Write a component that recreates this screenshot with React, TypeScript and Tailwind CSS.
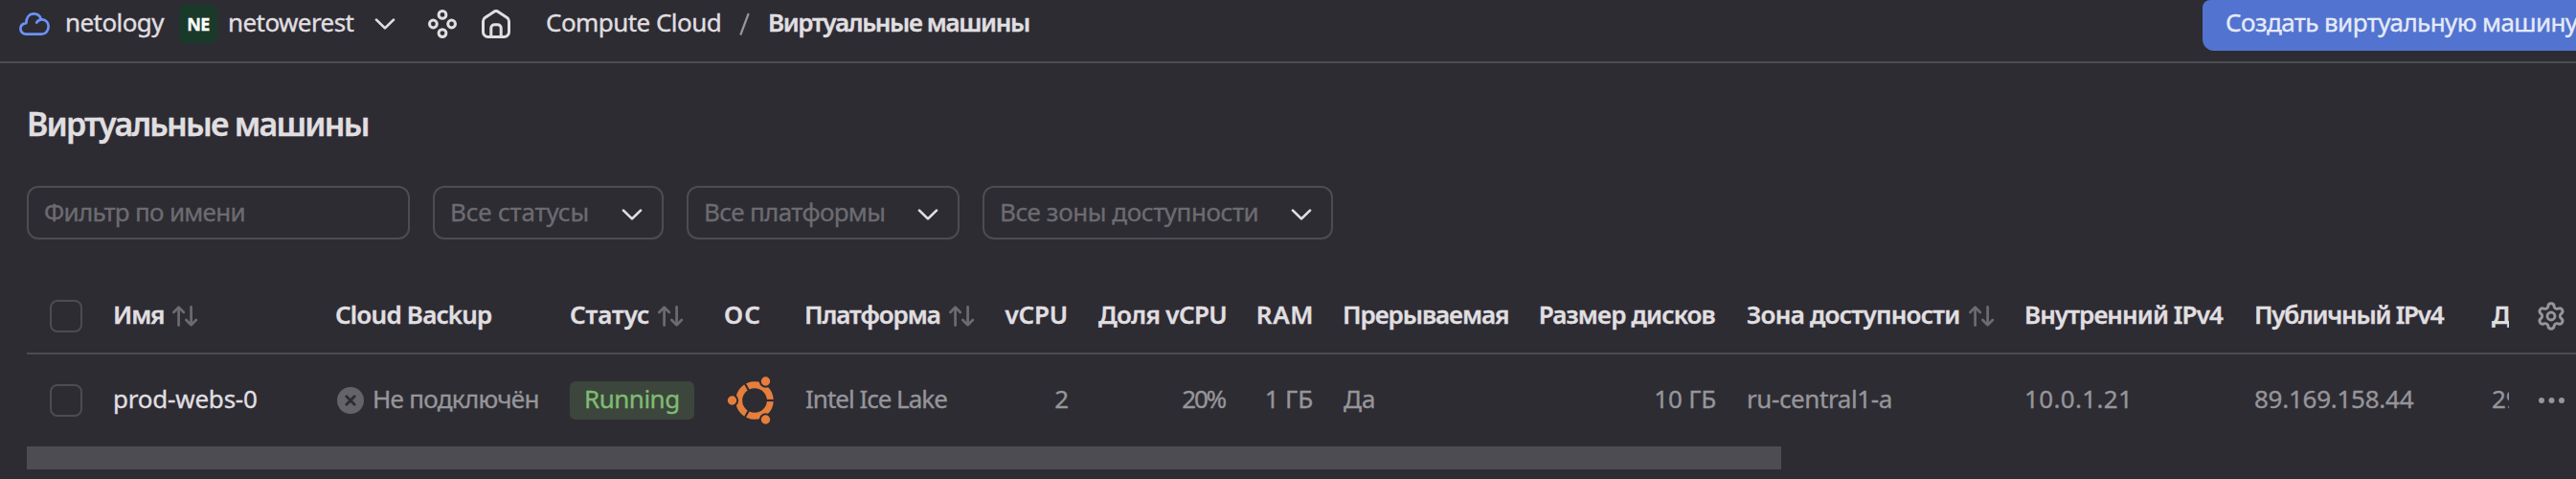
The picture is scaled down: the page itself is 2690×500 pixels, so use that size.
import type { ReactNode } from "react";
import { Settings } from "lucide-react";

function Chevron({ className = "" }: { className?: string }) {
  return (
    <svg className={"shrink-0 " + className} width="22" height="12" viewBox="0 0 22 12" fill="none" stroke="#e0dfe0" strokeWidth="2.7" strokeLinecap="round" strokeLinejoin="round">
      <path d="M2 1.6 11 10.4 20 1.6" />
    </svg>
  );
}

function SortArrows() {
  return (
    <svg className="ml-2 mt-1 shrink-0" width="28" height="22" viewBox="0 0 28 22" fill="none" stroke="#6c6b70" strokeWidth="2.7" strokeLinecap="round" strokeLinejoin="round">
      <path d="M7.6 20.6V1.8M2.4 7 7.6 1.6 12.8 7" />
      <path d="M20.6 1.4V20.2M15.4 15 20.6 20.4 25.8 15" />
    </svg>
  );
}

function CloudLogo() {
  return (
    <svg className="shrink-0" width="32" height="24" viewBox="0 0 32 24" fill="none" stroke="#6b93f6" strokeWidth="2.7" strokeLinecap="round" strokeLinejoin="round">
      <path d="M18.2 10.6A6.2 6.2 0 0 1 24 7.4a7 7 0 0 1 6.6 7.3c0 4.4-3 7.9-7.2 7.9H7.2a5.8 5.8 0 0 1-5.8-5.7c0-3 2.3-5.3 5.9-5.8C7.4 5.3 10.6 1.4 15.4 1.4c3.8 0 6.6 2.5 7.5 6" />
    </svg>
  );
}

function ServicesIcon() {
  return (
    <svg className="shrink-0" width="30" height="30" viewBox="0 0 30 30" fill="none" stroke="#e0dfe0" strokeWidth="3">
      <circle cx="15" cy="5.4" r="3.9" />
      <circle cx="5.4" cy="15" r="3.9" />
      <circle cx="24.6" cy="15" r="3.9" />
      <circle cx="15" cy="24.6" r="3.9" />
    </svg>
  );
}

function HomeIcon() {
  return (
    <svg className="shrink-0" width="30" height="30" viewBox="0 0 30 30" fill="none" stroke="#e0dfe0" strokeWidth="3" strokeLinecap="round" strokeLinejoin="round">
      <path d="M1.5 12.2c0-1.5.7-2.8 1.9-3.7L12.9 2.2c1.3-.9 2.9-.9 4.2 0L26.6 8.5c1.2.9 1.9 2.2 1.9 3.7V23.500a5 5 0 0 1-5 5H6.500a5 5 0 0 1-5-5Z" />
      <path d="M9.8 28V19.300a3.500 3.500 0 0 1 3.500-3.500h3.400a3.500 3.500 0 0 1 3.500 3.500V28" />
    </svg>
  );
}

function UbuntuLogo() {
  return (
    <svg className="ml-[2px] shrink-0" width="50" height="52" viewBox="-29 -26 50 52">
      <circle r="16.3" fill="none" stroke="#e67e3c" strokeWidth="6.9" />
      <g stroke="#2d2c33" strokeWidth="2.2">
        <path d="M11 0H21" />
        <path d="M-5.5-9.53-10.5-18.19" />
        <path d="M-5.5 9.53-10.5 18.19" />
      </g>
      <g fill="#e67e3c" stroke="#2d2c33" strokeWidth="2">
        <circle cx="-23.5" r="5.7" />
        <circle cx="11.5" cy="-20" r="5.7" />
        <circle cx="11.5" cy="20" r="5.7" />
      </g>
    </svg>
  );
}

function CrossBadge() {
  return (
    <svg className="ml-[2px] mr-[9px] shrink-0" width="28" height="28" viewBox="0 0 28 28">
      <circle cx="14" cy="14" r="14" fill="#646369" />
      <path d="M9.8 9.8 18.2 18.2M18.2 9.8 9.8 18.2" stroke="#2d2c33" strokeWidth="2.8" strokeLinecap="round" />
    </svg>
  );
}

function Checkbox() {
  return <span className="ml-6 block size-[34px] rounded-[8px] border-2 border-[#4d4c52]" />;
}

function Select({ children, className }: { children: ReactNode; className: string }) {
  return (
    <div className={"flex h-14 items-center justify-between rounded-xl border-2 border-[#4d4c52] pl-4 pr-[20px] text-[#6c6b70] " + className}>
      <span className="pb-[3px]">{children}</span>
      <Chevron className="mt-[3px]" />
    </div>
  );
}

function Cell({ children, className = "" }: { children?: ReactNode; className?: string }) {
  return <div className={"flex items-center pb-1 " + className}>{children}</div>;
}

const columns =
  "grid w-[2592px] shrink-0 overflow-hidden grid-cols-[89px_232px_245px_162px_84px_190px_87px_165px_90px_231px_190px_320px_240px_249px_18px]";

export default function App() {
  return (
    <div className="h-[500px] w-[2690px] overflow-hidden whitespace-nowrap bg-[#2d2c33] font-['Noto_Sans','Open_Sans',sans-serif] text-[26px] leading-9 text-[#e0dfe0] [-webkit-text-stroke:0.35px]">
      <header className="flex h-[66px] items-start justify-between border-b-2 border-[#4d4c52]">
        <div className="flex h-[50px] items-center pl-5">
          <CloudLogo />
          <span className="ml-4 w-[103px] pb-1 tracking-[-0.58px]">netology</span>
          <span className="ml-4 flex h-10 w-10 items-center justify-center rounded-[7px] bg-[#1a3a29] text-lg font-bold tracking-[-0.6px] text-white">NE</span>
          <span className="ml-[11px] w-[132px] pb-1 tracking-[-0.58px]">netowerest</span>
          <Chevron className="ml-[21px]" />
          <span className="ml-[34px] flex gap-[26px]">
            <ServicesIcon />
            <HomeIcon />
          </span>
          <span className="ml-[37px] w-[182px] pb-1 tracking-[-0.55px]">Compute Cloud</span>
          <svg className="ml-5 shrink-0" width="11" height="24" viewBox="0 0 11 24" stroke="#969599" strokeWidth="2.2">
            <path d="M1.3 23.5 9.7 1" />
          </svg>
          <span className="ml-[19px] pb-1 font-semibold tracking-[-1.37px]">Виртуальные машины</span>
        </div>
        <div className="h-[53px] w-[390px] overflow-hidden rounded-bl-xl rounded-tl-[8px] bg-[#5273d0] pl-6 pt-[5px] tracking-[-0.59px] text-[#e5eaf8]">
          Создать виртуальную машину
        </div>
      </header>

      <main className="pl-7">
        <h1 className="pt-10 text-[34px] font-semibold leading-[46px] tracking-[-1.8px]">Виртуальные машины</h1>

        <div className="mt-[42px] flex gap-6">
          <div className="flex h-14 w-[400px] items-center rounded-xl border-2 border-[#4d4c52] pb-[2px] pl-4 tracking-[-0.7px] text-[#6c6b70]">Фильтр по имени</div>
          <Select className="w-[241px] tracking-[-0.15px]">Все статусы</Select>
          <Select className="w-[285px] tracking-[-0.65px]">Все платформы</Select>
          <Select className="w-[366px] tracking-[-0.42px]">Все зоны доступности</Select>
        </div>

        <div className="mt-[42px] flex h-[78px] border-b-2 border-[#4d4c52] font-semibold">
          <div className={columns}>
            <div className="flex items-center"><Checkbox /></div>
            <Cell className="pl-px"><span className="tracking-[-1.1px]">Имя</span><SortArrows /></Cell>
            <Cell className="pl-px tracking-[-0.8px]">Cloud Backup</Cell>
            <Cell className="pl-px"><span className="tracking-[-0.1px]">Статус</span><SortArrows /></Cell>
            <Cell className="tracking-[1.2px]">ОС</Cell>
            <Cell><span className="tracking-[-1.07px]">Платформа</span><SortArrows /></Cell>
            <Cell className="justify-end pr-[2px] tracking-[-0.17px]">vCPU</Cell>
            <Cell className="justify-end pr-px tracking-[-0.65px]">Доля vCPU</Cell>
            <Cell className="justify-end tracking-[0.6px]">RAM</Cell>
            <Cell className="pl-[30px] tracking-[-1.05px]">Прерываемая</Cell>
            <Cell className="justify-end pr-[2px] tracking-[-0.81px]">Размер дисков</Cell>
            <Cell className="pl-[31px]"><span className="tracking-[-0.72px]">Зона доступности</span><SortArrows /></Cell>
            <Cell className="pl-px tracking-[-0.91px]">Внутренний IPv4</Cell>
            <Cell className="pl-px tracking-[-1.26px]">Публичный IPv4</Cell>
            <Cell>Д</Cell>
          </div>
          <div className="flex flex-1 items-center pl-7">
            <Settings size={32} strokeWidth={2.2} color="#969599" />
          </div>
        </div>

        <div className="flex h-24 text-[#969599]">
          <div className={columns}>
            <div className="flex items-center"><Checkbox /></div>
            <Cell className="pl-px tracking-[-0.22px] text-[#e0dfe0]">prod-webs-0</Cell>
            <div className="flex items-center pl-px"><CrossBadge /><span className="pb-1 tracking-[-0.72px]">Не подключён</span></div>
            <div className="flex items-center">
              <span className="ml-px flex h-10 w-[130px] items-center rounded-[6px] bg-[#3c463c] pb-1 pl-[15px] tracking-[-0.5px] text-[#7fbb73]">Running</span>
            </div>
            <div className="flex items-center pl-px"><UbuntuLogo /></div>
            <Cell className="pl-px tracking-[-1px]">Intel Ice Lake</Cell>
            <Cell className="justify-end pr-px">2</Cell>
            <Cell className="justify-end pr-[3px] tracking-[-2.2px]">20%</Cell>
            <Cell className="justify-end pr-px tracking-[-0.16px]">1 ГБ</Cell>
            <Cell className="pl-[31px]">Да</Cell>
            <Cell className="justify-end pr-px tracking-[-0.18px]">10 ГБ</Cell>
            <Cell className="pl-[31px] tracking-[-0.4px]">ru-central1-a</Cell>
            <Cell className="pl-px tracking-[0.34px]">10.0.1.21</Cell>
            <Cell className="pl-px tracking-[-0.26px]">89.169.158.44</Cell>
            <Cell>29</Cell>
          </div>
          <div className="flex flex-1 items-center pl-[31px]">
            <svg width="28" height="6" viewBox="0 0 28 6" fill="#969599">
              <circle cx="3" cy="3" r="3" />
              <circle cx="13.5" cy="3" r="3" />
              <circle cx="24" cy="3" r="3" />
            </svg>
          </div>
        </div>

        <div className="h-6 w-[1832px] bg-[#4d4c52]" />
      </main>
    </div>
  );
}
